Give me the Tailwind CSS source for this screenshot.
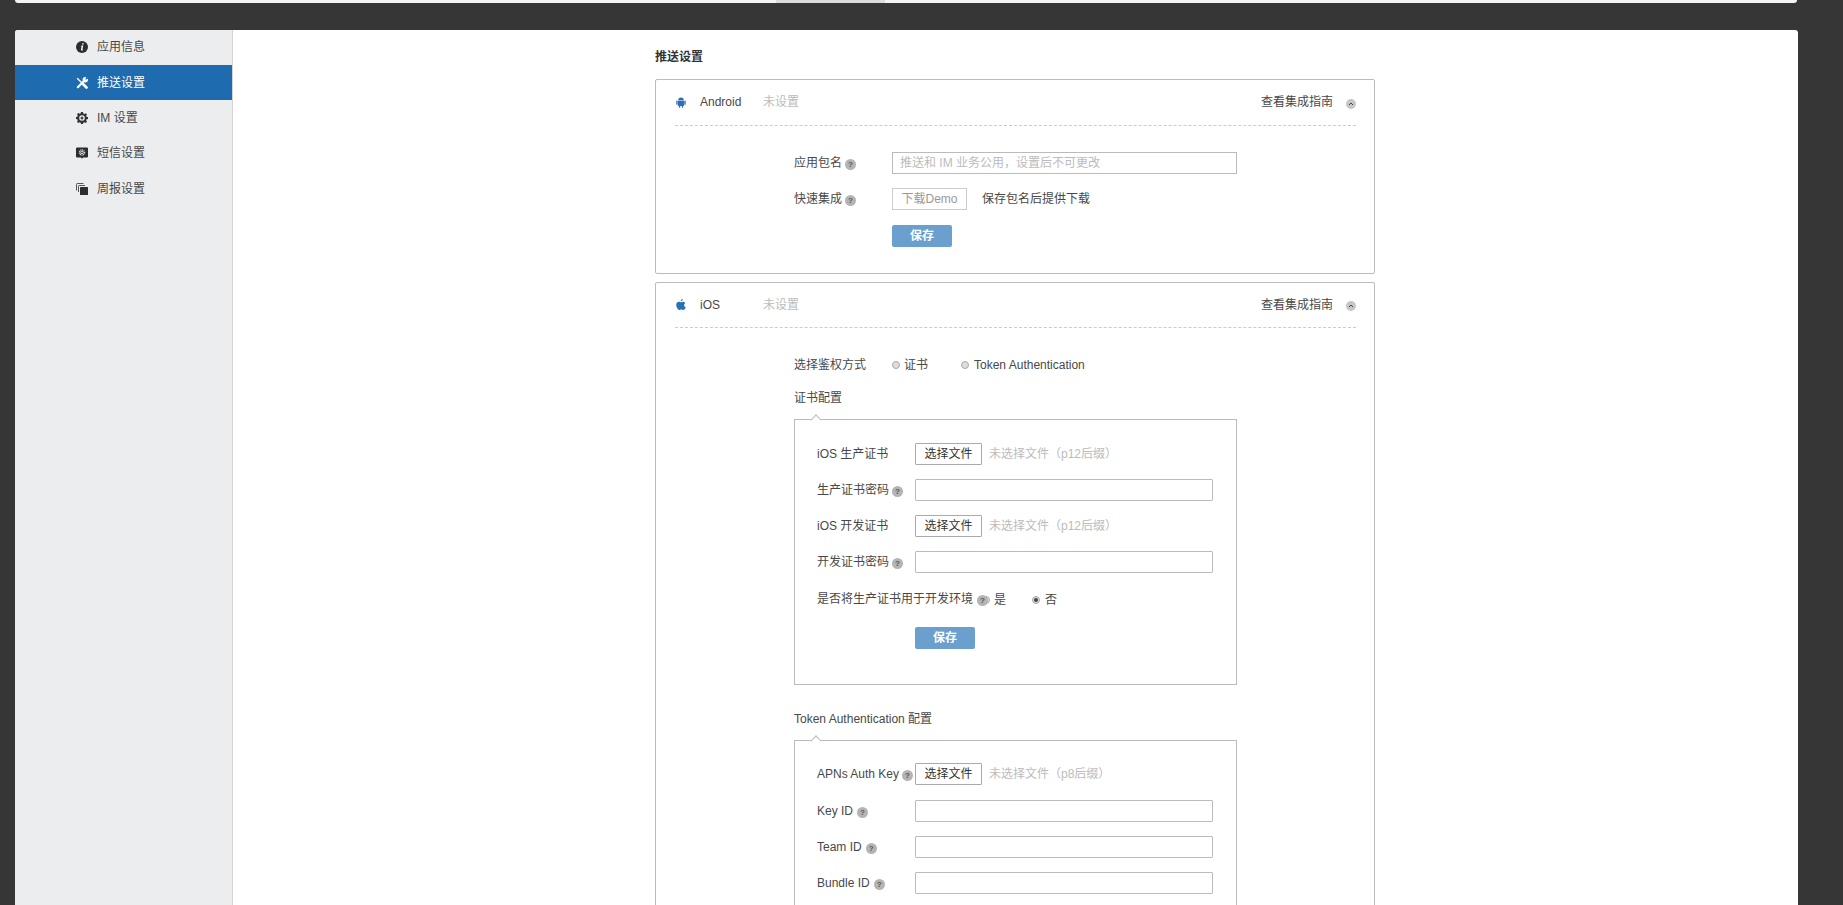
<!DOCTYPE html>
<html lang="zh-CN">
<head>
    <meta charset="UTF-8">
    <meta name="viewport" content="width=device-width, initial-scale=1.0">
    <title>推送设置</title>
    <script src="https://cdn.jsdelivr.net/npm/@tailwindcss/browser@4"></script>
</head>
<body class="bg-[#363636] h-[905px] overflow-hidden text-xs text-[#484848] font-['Liberation_Sans','Noto_Sans_CJK_SC',sans-serif]">
    <!-- top bar, scrolled almost out of view -->
    <div class="ml-[15px] w-[1782px] h-[3px] bg-[#f3f3f3] rounded-b-sm pl-[761px]">
        <div class="w-[109px] h-[3px] bg-[#dcdcdc]"></div>
    </div>

    <div class="ml-[15px] mt-[27px] w-[1783px] h-[875px] bg-white rounded-t-[3px] flex overflow-hidden">
        <!-- sidebar -->
        <aside class="w-[218px] shrink-0 bg-[#ecedee] border-r border-[#d4d4d4]">
            <a class="flex items-center h-[35px] pb-[1px] pl-[61px] gap-[9px]">
                <svg class="w-3 h-3" viewBox="0 0 12 12"><circle cx="6" cy="6" r="6" fill="#2d2d2d"/><path d="M6.300 2.200h1.500l-.3 1.400H6zM5.600 4.600h1.600L6.400 8.400c0 .3.200.3.700.1l-.1.700c-.8.400-2.200.400-2-.7l.6-3.100h-.7z" fill="#fff"/></svg>
                <span>应用信息</span>
            </a>
            <a class="flex items-center h-[35px] pl-[61px] gap-[9px] bg-[#1e6bb0] text-white">
                <svg class="w-3 h-3" viewBox="0 0 12 12"><path d="M1.200 1.200 5.500 5.500" stroke="#fff" stroke-width="1.400"/><path d="M6.500 6.500l4 4" stroke="#fff" stroke-width="2.600" stroke-linecap="round"/><path d="M1.800 10.200 8 4" stroke="#fff" stroke-width="2.200" stroke-linecap="round"/><circle cx="9.300" cy="2.700" r="2.700" fill="#fff"/><path d="M9.300 2.700 10.300-.5 12.500 1.700z" fill="#1e6bb0"/></svg>
                <span>推送设置</span>
            </a>
            <a class="flex items-center h-[35px] pl-[61px] gap-[9px]">
                <svg class="w-3 h-3" viewBox="0 0 12 12"><path d="M5 0h2l.3 1.500 1.100.5L9.800 1.200l1.200 1.200-.8 1.400.5 1.100L12 5v2l-1.300.3-.5 1.100.8 1.400-1.200 1.200-1.400-.8-1.100.5L7 12H5l-.3-1.300-1.100-.5-1.400.8L1 9.800l.8-1.400-.5-1.100L0 7V5l1.300-.3.5-1.100L1 2.200 2.200 1l1.400.8 1.100-.5z" fill="#333"/><circle cx="6" cy="6" r="2.800" fill="#ecedee"/><circle cx="6" cy="6" r="1.500" fill="#444"/></svg>
                <span>IM 设置</span>
            </a>
            <a class="flex items-center h-[35px] pl-[61px] gap-[9px]">
                <svg class="w-3 h-3" viewBox="0 0 12 12"><path d="M1 .5h10a1 1 0 0 1 1 1v8a1 1 0 0 1-1 1H7l-1 1.300-1-1.300H1a1 1 0 0 1-1-1v-8a1 1 0 0 1 1-1z" fill="#2d2d2d"/><circle cx="6" cy="5.500" r="2.600" fill="none" stroke="#d8d8d8" stroke-width="1.300" stroke-dasharray="1.100 .6"/><circle cx="6" cy="5.500" r="1.700" fill="#d8d8d8"/><circle cx="6" cy="5.500" r=".8" fill="#2d2d2d"/></svg>
                <span>短信设置</span>
            </a>
            <a class="flex items-center h-[36px] pt-[1px] pl-[61px] gap-[9px]">
                <svg class="w-3 h-3" viewBox="0 0 12 12"><path d="M.5 7.500V1.200q0-.7.7-.7h6.300" fill="none" stroke="#555"/><path d="M2.500 9V3.200q0-.7.7-.7H9" fill="none" stroke="#555"/><rect x="4" y="4" width="8" height="8" rx=".6" fill="#2d2d2d"/></svg>
                <span>周报设置</span>
            </a>
        </aside>

        <!-- main -->
        <main class="flex-1">
            <div class="w-[720px] ml-[422px] pt-[18px]">
                <h2 class="h-[18px] leading-[18px] font-bold text-[#333] mb-[13px]">推送设置</h2>

                <!-- Android -->
                <section class="h-[195px] border border-[#bbb] rounded-[2px] mb-[8px]">
                    <div class="ml-[19px] mr-[18px] h-[46px] pb-[1px] border-b border-dashed border-[#ccc] flex items-center">
                        <div class="w-[25px] pl-[1px]">
                            <svg class="block w-[10px] h-[11px]" viewBox="0 0 10 11"><path d="M2.200 3.300a2.800 2.800 0 0 1 5.600 0zM1.800 3.700h6.400v4.500a.8.800 0 0 1-.8.800H7v1.200a.6.600 0 0 1-1.200 0V9H4.200v1.200a.6.600 0 0 1-1.200 0V9h-.4a.8.800 0 0 1-.8-.8zM.3 4a.7.700 0 0 1 1.200 0v3.200a.7.700 0 0 1-1.200 0zM8.500 4a.7.700 0 0 1 1.200 0v3.200a.7.700 0 0 1-1.200 0z" fill="#2a72b5"/></svg>
                        </div>
                        <span class="w-[63px]">Android</span>
                        <span class="text-[#bbb]">未设置</span>
                        <span class="ml-auto">查看集成指南</span>
                        <span class="ml-[13px] mt-[3px] w-[10px] h-[10px] rounded-full bg-[#c6c6c6] flex items-center justify-center">
                            <svg class="w-[6px] h-1" viewBox="0 0 6 4"><path d="M1 3l2-2 2 2" fill="none" stroke="#444" stroke-width="1"/></svg>
                        </span>
                    </div>
                    <div class="pl-[138px] pt-[26px]">
                        <div class="flex items-center h-[22px] mb-[14px]">
                            <div class="w-[98px] shrink-0 flex items-center">应用包名
                                <span class="ml-[3px] mt-[2px] w-[11px] h-[11px] rounded-full bg-[#b4b4b4] text-[#555] text-[8px] font-bold leading-[11px] text-center">?</span>
                            </div>
                            <input class="w-[345px] h-[22px] border border-[#bbb] px-[7px] placeholder:text-[#bbb]" placeholder="推送和 IM 业务公用，设置后不可更改">
                        </div>
                        <div class="flex items-center h-[22px] mb-[15px]">
                            <div class="w-[98px] shrink-0 flex items-center">快速集成
                                <span class="ml-[3px] mt-[2px] w-[11px] h-[11px] rounded-full bg-[#b4b4b4] text-[#555] text-[8px] font-bold leading-[11px] text-center">?</span>
                            </div>
                            <button class="w-[75px] h-[22px] border border-[#ccc] text-[#999] text-center">下载Demo</button>
                            <span class="ml-[15px]">保存包名后提供下载</span>
                        </div>
                        <div class="pl-[98px]">
                            <button class="block w-[60px] h-[22px] bg-[#6b9fce] rounded-[2px] text-white font-bold">保存</button>
                        </div>
                    </div>
                </section>

                <!-- iOS -->
                <section class="border border-[#bbb] rounded-[2px] h-[640px]">
                    <div class="ml-[19px] mr-[18px] h-[45px] pb-[1px] border-b border-dashed border-[#ccc] flex items-center">
                        <div class="w-[25px] pl-[1px]">
                            <svg class="block w-[10px] h-[11px]" viewBox="0 0 10 11"><path d="M6.800 0c.1 1.100-1 2.400-2.200 2.300C4.500 1.200 5.700.1 6.800 0zM7 2.700c.8 0 1.700.4 2.300 1.200-1.800 1.100-1.500 3.600.4 4.300-.5 1.300-1.500 2.800-2.500 2.800-.8 0-1.100-.5-2-.5s-1.300.5-2 .5C2 11 .2 8.200.2 5.800c0-2.100 1.400-3.100 2.700-3.100.9 0 1.600.6 2.100.6s1.100-.6 2-.6z" fill="#2a72b5"/></svg>
                        </div>
                        <span class="w-[63px]">iOS</span>
                        <span class="text-[#bbb]">未设置</span>
                        <span class="ml-auto">查看集成指南</span>
                        <span class="ml-[13px] mt-[3px] w-[10px] h-[10px] rounded-full bg-[#c6c6c6] flex items-center justify-center">
                            <svg class="w-[6px] h-1" viewBox="0 0 6 4"><path d="M1 3l2-2 2 2" fill="none" stroke="#444" stroke-width="1"/></svg>
                        </span>
                    </div>
                    <div class="pl-[138px] pt-[26px]">
                        <div class="flex items-center h-[22px]">
                            <div class="w-[98px] shrink-0">选择鉴权方式</div>
                            <span class="w-2 h-2 rounded-full bg-[#ddd] border border-[#aaa]"></span>
                            <span class="ml-[4px]">证书</span>
                            <span class="ml-[33px] w-2 h-2 rounded-full bg-[#ddd] border border-[#aaa]"></span>
                            <span class="ml-[5px]">Token Authentication</span>
                        </div>

                        <div class="h-[22px] leading-[22px] mt-[11px]">证书配置</div>
                        <div class="relative w-[443px] h-[266px] mt-[10px] border border-[#bbb] pl-[22px] pt-[23px]">
                            <span class="absolute -top-[4px] left-[17px] w-2 h-2 rotate-45 bg-white border-l border-t border-[#bbb]"></span>
                            <div class="flex items-center h-[22px] mb-[14px]">
                                <div class="w-[98px] shrink-0">iOS 生产证书</div>
                                <button class="w-[67px] h-[22px] border border-[#aaa] text-[#333] rounded-[1px]">选择文件</button>
                                <span class="ml-[7px] text-[#bbb]">未选择文件（p12后缀）</span>
                            </div>
                            <div class="flex items-center h-[22px] mb-[14px]">
                                <div class="w-[98px] shrink-0 flex items-center">生产证书密码
                                    <span class="ml-[3px] mt-[2px] w-[11px] h-[11px] rounded-full bg-[#b4b4b4] text-[#555] text-[8px] font-bold leading-[11px] text-center">?</span>
                                </div>
                                <input class="w-[298px] h-[22px] border border-[#bbb] rounded-[1px]">
                            </div>
                            <div class="flex items-center h-[22px] mb-[14px]">
                                <div class="w-[98px] shrink-0">iOS 开发证书</div>
                                <button class="w-[67px] h-[22px] border border-[#aaa] text-[#333] rounded-[1px]">选择文件</button>
                                <span class="ml-[7px] text-[#bbb]">未选择文件（p12后缀）</span>
                            </div>
                            <div class="flex items-center h-[22px] mb-[15px]">
                                <div class="w-[98px] shrink-0 flex items-center">开发证书密码
                                    <span class="ml-[3px] mt-[2px] w-[11px] h-[11px] rounded-full bg-[#b4b4b4] text-[#555] text-[8px] font-bold leading-[11px] text-center">?</span>
                                </div>
                                <input class="w-[298px] h-[22px] border border-[#bbb] rounded-[1px]">
                            </div>
                            <div class="flex items-center h-[22px] mb-[17px]">
                                <span class="w-[156px] shrink-0 whitespace-nowrap">是否将生产证书用于开发环境</span>
                                <span class="relative z-10 ml-[4px] mt-[2px] w-[11px] h-[11px] rounded-full bg-[#b4b4b4] text-[#555] text-[8px] font-bold leading-[11px] text-center">?</span>
                                <span class="-ml-[6px] mt-[2px] w-2 h-2 rounded-full bg-[#ddd] border border-[#aaa]"></span>
                                <span class="ml-[4px] mt-[2px]">是</span>
                                <span class="ml-[26px] mt-[1px] w-2 h-2 rounded-full bg-[#ddd] border border-[#aaa] flex items-center justify-center"><span class="w-1 h-1 rounded-full bg-[#444]"></span></span>
                                <span class="ml-[5px] mt-[2px]">否</span>
                            </div>
                            <div class="pl-[98px]">
                                <button class="block w-[60px] h-[22px] bg-[#6b9fce] rounded-[2px] text-white font-bold">保存</button>
                            </div>
                        </div>

                        <div class="h-[22px] leading-[22px] mt-[23px]">Token Authentication 配置</div>
                        <div class="relative w-[443px] h-[200px] mt-[10px] border border-[#bbb] pl-[22px] pt-[22px]">
                            <span class="absolute -top-[4px] left-[17px] w-2 h-2 rotate-45 bg-white border-l border-t border-[#bbb]"></span>
                            <div class="flex items-center h-[22px] mb-[15px]">
                                <div class="w-[98px] shrink-0 flex items-center whitespace-nowrap">APNs Auth Key
                                    <span class="ml-[3px] mt-[2px] w-[11px] h-[11px] rounded-full bg-[#b4b4b4] text-[#555] text-[8px] font-bold leading-[11px] text-center">?</span>
                                </div>
                                <button class="w-[67px] h-[22px] border border-[#aaa] text-[#333] rounded-[1px]">选择文件</button>
                                <span class="ml-[7px] text-[#bbb]">未选择文件（p8后缀）</span>
                            </div>
                            <div class="flex items-center h-[22px] mb-[14px]">
                                <div class="w-[98px] shrink-0 flex items-center">Key ID
                                    <span class="ml-[4px] mt-[2px] w-[11px] h-[11px] rounded-full bg-[#b4b4b4] text-[#555] text-[8px] font-bold leading-[11px] text-center">?</span>
                                </div>
                                <input class="w-[298px] h-[22px] border border-[#bbb] rounded-[1px]">
                            </div>
                            <div class="flex items-center h-[22px] mb-[14px]">
                                <div class="w-[98px] shrink-0 flex items-center">Team ID
                                    <span class="ml-[4px] mt-[2px] w-[11px] h-[11px] rounded-full bg-[#b4b4b4] text-[#555] text-[8px] font-bold leading-[11px] text-center">?</span>
                                </div>
                                <input class="w-[298px] h-[22px] border border-[#bbb] rounded-[1px]">
                            </div>
                            <div class="flex items-center h-[22px]">
                                <div class="w-[98px] shrink-0 flex items-center">Bundle ID
                                    <span class="ml-[4px] mt-[2px] w-[11px] h-[11px] rounded-full bg-[#b4b4b4] text-[#555] text-[8px] font-bold leading-[11px] text-center">?</span>
                                </div>
                                <input class="w-[298px] h-[22px] border border-[#bbb] rounded-[1px]">
                            </div>
                        </div>
                    </div>
                </section>
            </div>
        </main>
    </div>
</body>
</html>
